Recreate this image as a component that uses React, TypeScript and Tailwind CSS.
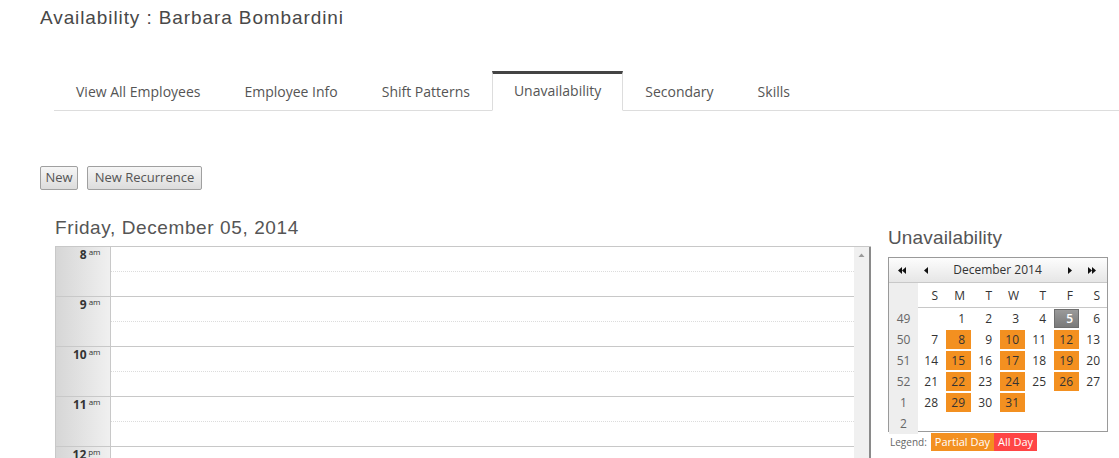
const tabs = ["View All Employees", "Employee Info", "Shift Patterns", "Unavailability", "Secondary", "Skills"];

const hours = [
    { h: "8", s: "am" },
    { h: "9", s: "am" },
    { h: "10", s: "am" },
    { h: "11", s: "am" },
    { h: "12", s: "pm" },
];

const weeks: { wk: string; days: (number | null)[] }[] = [
    { wk: "49", days: [null, 1, 2, 3, 4, 5, 6] },
    { wk: "50", days: [7, 8, 9, 10, 11, 12, 13] },
    { wk: "51", days: [14, 15, 16, 17, 18, 19, 20] },
    { wk: "52", days: [21, 22, 23, 24, 25, 26, 27] },
    { wk: "1", days: [28, 29, 30, 31, null, null, null] },
    { wk: "2", days: [null, null, null, null, null, null, null] },
];

const partial = [8, 10, 12, 15, 17, 19, 22, 24, 26, 29, 31];

function Tri({ dir }: { dir: "l" | "r" }) {
    return (
        <svg width="4" height="7" viewBox="0 0 4 7">
            {dir === "l" ? <path d="M4 0 L0 3.5 L4 7 Z" fill="#111" /> : <path d="M0 0 L4 3.5 L0 7 Z" fill="#111" />}
        </svg>
    );
}

function MiniCalendar() {
    return (
        <div className="w-[220px] border border-[#9a9a9a] bg-white font-['Open_Sans',sans-serif] text-[12px] text-[#333]">
            <div className="flex h-[25px] items-center border-b border-[#c8c8c8] bg-gradient-to-b from-[#fdfdfd] to-[#e6e6e6]">
                <div className="flex w-[26px] justify-center">
                    <Tri dir="l" />
                    <Tri dir="l" />
                </div>
                <div className="flex w-[21px] justify-center">
                    <Tri dir="l" />
                </div>
                <div className="flex-1 text-center">December 2014</div>
                <div className="flex w-[21px] justify-center">
                    <Tri dir="r" />
                </div>
                <div className="flex w-[24px] justify-center">
                    <Tri dir="r" />
                    <Tri dir="r" />
                </div>
                <div className="w-[3px]" />
            </div>
            <div className="grid h-[25px] grid-cols-[29px_repeat(7,27px)] border-b border-[#c8c8c8]">
                <div className="bg-[#eeeeee]" />
                {["S", "M", "T", "W", "T", "F", "S"].map((d, i) => (
                    <div key={i} className="pr-[7px] text-right leading-[25px]">
                        {d}
                    </div>
                ))}
            </div>
            {weeks.map((w, ri) => (
                <div key={w.wk} className={`grid grid-cols-[29px_repeat(7,27px)] ${ri === 5 ? "h-[18px]" : "h-[21px]"}`}>
                    <div className="bg-[#eeeeee] text-center leading-[21px] text-[#666]">{w.wk}</div>
                    {w.days.map((d, i) => {
                        if (d === null) return <div key={i} />;
                        if (d === 5)
                            return (
                                <div key={i} className="p-px">
                                    <div className="h-full border border-[#6e6e6e] bg-gradient-to-b from-[#9a9a9a] to-[#7a7a7a] pr-[5px] text-right font-semibold leading-[17px] text-white">
                                        {d}
                                    </div>
                                </div>
                            );
                        const orange = partial.includes(d);
                        return (
                            <div key={i} className="p-px">
                                <div className={`h-full pr-[6px] text-right leading-[19px] ${orange ? "bg-[#f39020]" : ""}`}>{d}</div>
                            </div>
                        );
                    })}
                </div>
            ))}
        </div>
    );
}

function Scheduler() {
    return (
        <div className="flex h-[260px] w-[816px] border-l border-t border-[#c8c8c8]">
            <div className="flex-1">
                {hours.map((r) => (
                    <div key={r.h + r.s} className="flex h-[50px] border-b border-[#c8c8c8]">
                        <div className="flex w-[55px] items-start justify-end border-r border-[#c8c8c8] bg-gradient-to-r from-[#d6d6d6] to-[#f0f0f0] pr-[10px] pt-[2px] font-['Open_Sans',sans-serif] text-[#333]">
                            <span className="text-[12px] font-bold leading-[12px]">{r.h}</span>
                            <span className="ml-[2px] mt-[-1px] text-[8px] leading-[8px] tracking-[-0.3px]">{r.s}</span>
                        </div>
                        <div className="flex-1">
                            <div className="h-[25px] border-b border-dotted border-[#dcdcdc]" />
                        </div>
                    </div>
                ))}
            </div>
            <div className="w-[17px] border-r-2 border-[#8a8a8a] bg-[#f0f0f0] pt-[6px]">
                <svg width="15" height="4" viewBox="0 0 15 4" className="block">
                    <path d="M4.5 4 L7.5 0.5 L10.5 4 Z" fill="#9a9a9a" />
                </svg>
            </div>
        </div>
    );
}

export default function App() {
    return (
        <div className="h-[458px] w-[1119px] overflow-hidden bg-white">
            <div className="pl-[40px] pt-[7px] font-['Liberation_Sans',Arial,sans-serif] text-[19px] leading-[22px] tracking-[0.9px] text-[#484848]">
                Availability : Barbara Bombardini
            </div>

            <div className="ml-[54px] mt-[42px] flex items-end border-b border-[#dddddd] font-['Open_Sans',sans-serif] text-[14px] text-[#555]">
                {tabs.map((t) =>
                    t === "Unavailability" ? (
                        <div key={t} className="-mb-px flex h-[40px] items-center border-x border-t-[3px] border-b border-x-[#dddddd] border-t-[#444] border-b-white bg-white px-[21px] pb-[3px]">
                            {t}
                        </div>
                    ) : (
                        <div key={t} className="flex h-[39px] items-center border-x border-t-[3px] border-transparent px-[21px] pb-[2px]">
                            {t}
                        </div>
                    )
                )}
            </div>

            <div className="ml-[40px] mt-[55px] flex gap-[9px] font-['Open_Sans',sans-serif] text-[13px] text-[#555]">
                <button className="h-[24px] w-[38px] rounded-[2px] border border-[#a0a0a0] bg-gradient-to-b from-[#f6f6f6] to-[#dcdcdc] text-center">New</button>
                <button className="h-[24px] w-[115px] rounded-[2px] border border-[#a0a0a0] bg-gradient-to-b from-[#f6f6f6] to-[#dcdcdc] text-center">New Recurrence</button>
            </div>

            <div className="mt-[27px] flex">
                <div className="ml-[55px] w-[833px]">
                    <div className="font-['Liberation_Sans',Arial,sans-serif] text-[19px] leading-[22px] tracking-[0.6px] text-[#555]">Friday, December 05, 2014</div>
                    <div className="mt-[7px]">
                        <Scheduler />
                    </div>
                </div>
                <div className="mt-[9px]">
                    <div className="font-['Liberation_Sans',Arial,sans-serif] text-[19px] leading-[24px] tracking-[0.15px] text-[#555]">Unavailability</div>
                    <div className="mt-[7px]">
                        <MiniCalendar />
                    </div>
                    <div className="mt-px flex h-[18px] items-center font-['Open_Sans',sans-serif]">
                        <span className="ml-[2px] mr-[4px] text-[10px] text-[#666]">Legend:</span>
                        <span className="flex h-[18px] items-center bg-[#f39020] px-[4px] text-[11px] text-white">Partial Day</span>
                        <span className="flex h-[18px] items-center bg-[#ff4545] px-[4px] text-[11px] text-white">All Day</span>
                    </div>
                </div>
            </div>
        </div>
    );
}
